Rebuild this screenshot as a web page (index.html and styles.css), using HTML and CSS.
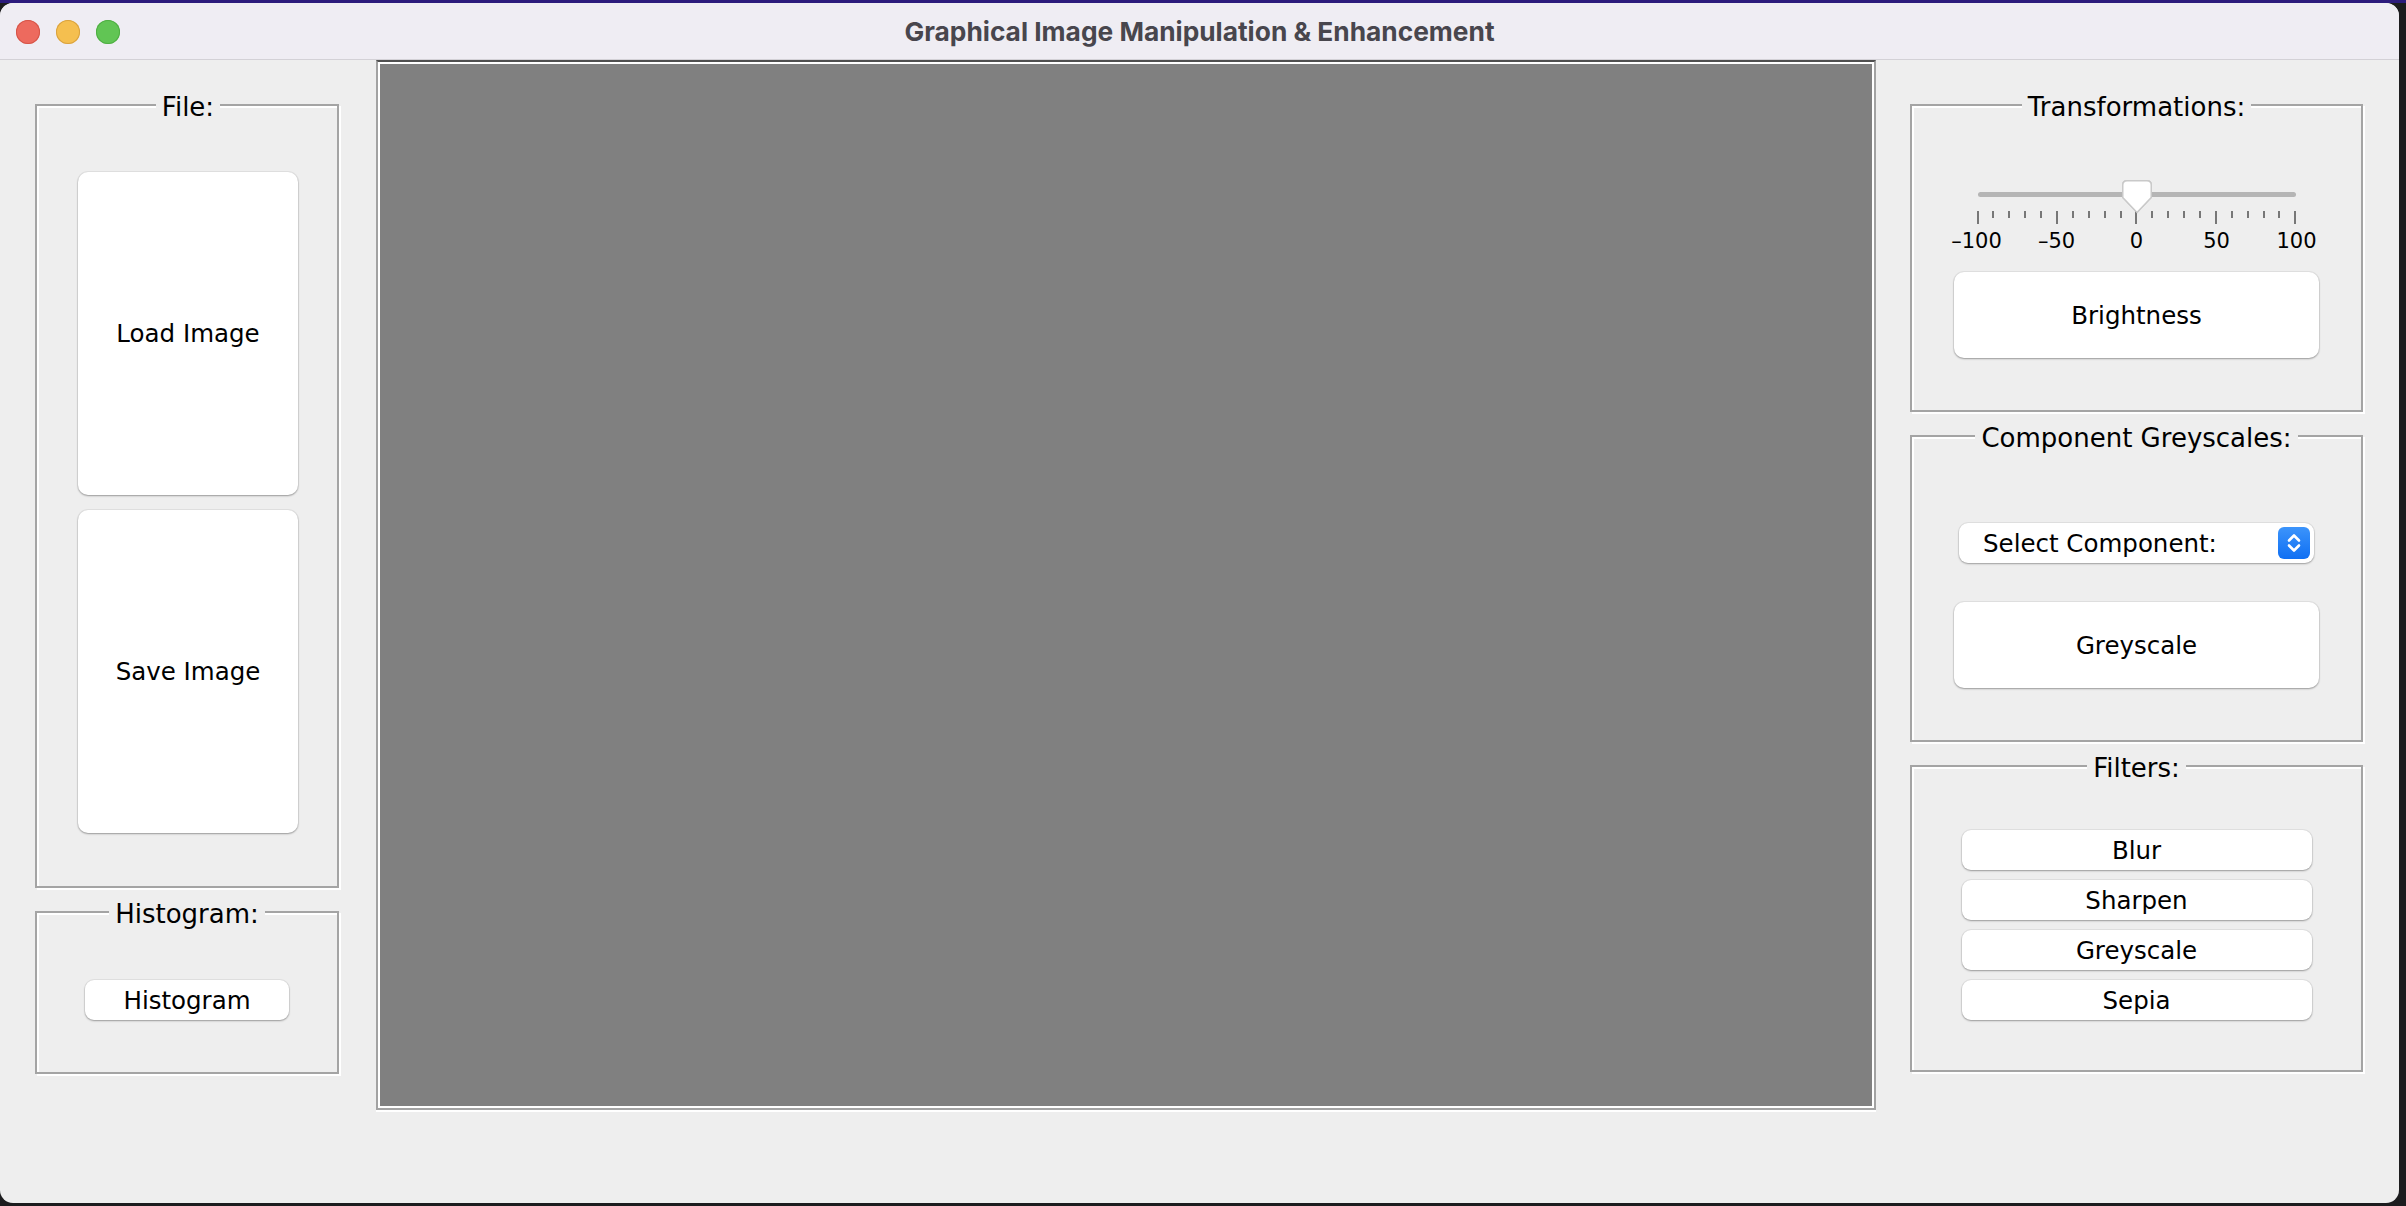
FILE: index.html
```html
<!DOCTYPE html>
<html lang="en">
<head>
<meta charset="utf-8">
<title>Graphical Image Manipulation &amp; Enhancement</title>
<link rel="stylesheet" href="styles.css">
</head>
<body>
<div class="strip"></div>
<div class="window">
  <header class="titlebar">
    <div class="lights">
      <span class="light red"></span>
      <span class="light yellow"></span>
      <span class="light green"></span>
    </div>
    <div class="title">Graphical Image Manipulation &amp; Enhancement</div>
    <div class="spacer"></div>
  </header>
  <main class="content">
    <div class="col">
      <section class="panel file-panel">
        <div class="legend">File:</div>
        <button class="btn big">Load Image</button>
        <button class="btn big">Save Image</button>
      </section>
      <section class="panel hist-panel">
        <div class="legend">Histogram:</div>
        <button class="btn hist-btn">Histogram</button>
      </section>
    </div>
    <div class="canvas"></div>
    <div class="col">
      <section class="panel trans-panel">
        <div class="legend">Transformations:</div>
        <div class="slider">
          <div class="track-area">
            <div class="track"></div>
            <svg class="thumb" width="30" height="34" viewBox="0 0 30 34">
              <path d="M5 0.75 H25 Q29.25 0.75 29.25 5 V17.5 L15 32.5 L0.75 17.5 V5 Q0.75 0.75 5 0.75 Z" fill="#ffffff" stroke="#c9c9c9" stroke-width="1.5"/>
            </svg>
          </div>
          <div class="ticks">
            <span class="tick major"></span><span class="tick"></span><span class="tick"></span><span class="tick"></span><span class="tick"></span>
            <span class="tick major"></span><span class="tick"></span><span class="tick"></span><span class="tick"></span><span class="tick"></span>
            <span class="tick major"></span><span class="tick"></span><span class="tick"></span><span class="tick"></span><span class="tick"></span>
            <span class="tick major"></span><span class="tick"></span><span class="tick"></span><span class="tick"></span><span class="tick"></span>
            <span class="tick major"></span>
          </div>
          <div class="labels">
            <span>–100</span><span>–50</span><span>0</span><span>50</span><span>100</span>
          </div>
        </div>
        <button class="btn tall-btn bright-btn">Brightness</button>
      </section>
      <section class="panel comp-panel">
        <div class="legend">Component Greyscales:</div>
        <div class="select">
          <span class="select-text">Select Component:</span>
          <span class="stepper">
            <svg width="32" height="32" viewBox="0 0 32 32">
              <path d="M11 13.5 L16 8.5 L21 13.5" fill="none" stroke="#ffffff" stroke-width="2.6" stroke-linecap="round" stroke-linejoin="round"/>
              <path d="M11 18.5 L16 23.5 L21 18.5" fill="none" stroke="#ffffff" stroke-width="2.6" stroke-linecap="round" stroke-linejoin="round"/>
            </svg>
          </span>
        </div>
        <button class="btn tall-btn grey-btn">Greyscale</button>
      </section>
      <section class="panel filter-panel">
        <div class="legend">Filters:</div>
        <div class="filter-list">
          <button class="btn filter-btn">Blur</button>
          <button class="btn filter-btn">Sharpen</button>
          <button class="btn filter-btn">Greyscale</button>
          <button class="btn filter-btn">Sepia</button>
        </div>
      </section>
    </div>
  </main>
</div>
</body>
</html>
```

FILE: styles.css
```css
* {
  box-sizing: border-box;
}

html,
body {
  margin: 0;
  padding: 0;
}

body {
  width: 2406px;
  height: 1206px;
  overflow: hidden;
  background: #1c1c1e;
  font-family: "DejaVu Sans", "Liberation Sans", sans-serif;
  color: #000;
}

.strip {
  height: 3px;
  background: #2c1b7c;
}

.window {
  width: 2399px;
  height: 1200px;
  background: #eeeeee;
  border-radius: 13px;
  overflow: hidden;
  display: flex;
  flex-direction: column;
}

.titlebar {
  flex: none;
  height: 57px;
  background: #efedf3;
  border-bottom: 1px solid #d3d1d6;
  display: grid;
  grid-template-columns: 1fr auto 1fr;
  align-items: center;
}

.lights {
  display: flex;
  gap: 16px;
  padding-left: 16px;
  padding-top: 2px;
}

.light {
  width: 24px;
  height: 24px;
  border-radius: 50%;
}

.red {
  background: #ed6a5e;
  box-shadow: inset 0 0 0 1px #d55548;
}

.yellow {
  background: #f5bf4f;
  box-shadow: inset 0 0 0 1px #d9a23f;
}

.green {
  background: #61c554;
  box-shadow: inset 0 0 0 1px #4fae43;
}

.title {
  font-family: Inter, "Noto Sans", sans-serif;
  font-weight: 700;
  font-size: 26.3px;
  color: #48464d;
}

.content {
  flex: 1;
  display: grid;
  grid-template-columns: 304px 1571px 453px;
  align-items: start;
  padding-left: 35px;
}

.col {
  display: flex;
  flex-direction: column;
  gap: 23px;
  padding-top: 44px;
}

.canvas {
  height: 1050px;
  margin: 0 34px 0 37px;
  background: #808080;
  border: 2px solid #a2a2a2;
  border-top-color: #505050;
  box-shadow: inset 0 0 0 2px #ffffff, 0 2px 0 #ffffff;
}

.panel {
  border: 2px solid #a4a4a4;
  box-shadow: inset 2px 2px 0 #ffffff, 2px 2px 0 #ffffff;
  display: flex;
  flex-direction: column;
  align-items: center;
}

.legend {
  margin-top: -14px;
  padding: 0 6px;
  background: #eeeeee;
  font-size: 26px;
  line-height: 30px;
  color: #000;
  white-space: nowrap;
}

.btn {
  font-family: inherit;
  font-size: 24.5px;
  color: #000;
  background: #ffffff;
  border: none;
  border-radius: 10px;
  box-shadow: 0 0 0 1px rgba(0, 0, 0, 0.05), 0 1px 2px rgba(0, 0, 0, 0.32);
  padding: 0;
  cursor: default;
}

/* File panel */
.file-panel {
  height: 784px;
  padding: 0 39px 53px 41px;
  align-items: stretch;
}

.file-panel .legend {
  align-self: center;
}

.file-panel .big {
  flex: 1;
}

.file-panel .legend + .big {
  margin-top: 50px;
}

.file-panel .big + .big {
  margin-top: 15px;
}

/* Histogram panel */
.hist-panel {
  height: 163px;
}

.hist-btn {
  margin-top: 51px;
  width: 204px;
  height: 40px;
  border-radius: 9px;
}

/* Transformations panel */
.trans-panel {
  height: 308px;
}

.slider {
  margin-top: 58px;
  width: 400px;
  display: flex;
  flex-direction: column;
  align-items: center;
}

.track-area {
  position: relative;
  width: 320px;
  height: 31px;
  padding: 12px 1px 0;
}

.track {
  height: 5px;
  border-radius: 3px;
  background: #b5b5b5;
}

.thumb {
  position: absolute;
  left: 145px;
  top: 0;
  filter: drop-shadow(0 0.5px 0.5px rgba(0, 0, 0, 0.15));
}

.ticks {
  width: 320px;
  height: 13px;
  display: flex;
  justify-content: space-between;
  align-items: flex-start;
}

.tick {
  width: 2px;
  height: 7px;
  background: #777777;
}

.tick.major {
  height: 13px;
}

.labels {
  width: 400px;
  margin-top: 4px;
  display: flex;
  justify-content: space-between;
}

.labels span {
  width: 80px;
  text-align: center;
  font-size: 21px;
  line-height: 26px;
}

.tall-btn {
  width: 365px;
  height: 86px;
}

.bright-btn {
  margin-top: 18px;
}

/* Component panel */
.comp-panel {
  height: 307px;
}

.select {
  margin-top: 70px;
  width: 355px;
  height: 40px;
  background: #ffffff;
  border-radius: 9px;
  box-shadow: 0 0 0 1px rgba(0, 0, 0, 0.05), 0 1px 2px rgba(0, 0, 0, 0.3);
  display: flex;
  align-items: center;
  justify-content: space-between;
  padding: 0 4px 0 24px;
}

.select-text {
  font-size: 24.5px;
}

.stepper {
  width: 32px;
  height: 32px;
  border-radius: 6px;
  background: linear-gradient(#3c94fb, #0f6ff3);
  display: flex;
}

.grey-btn {
  margin-top: 39px;
}

/* Filters panel */
.filter-panel {
  height: 307px;
}

.filter-list {
  margin-top: 47px;
  display: flex;
  flex-direction: column;
  gap: 10px;
}

.filter-btn {
  width: 350px;
  height: 40px;
  border-radius: 9px;
}
```
